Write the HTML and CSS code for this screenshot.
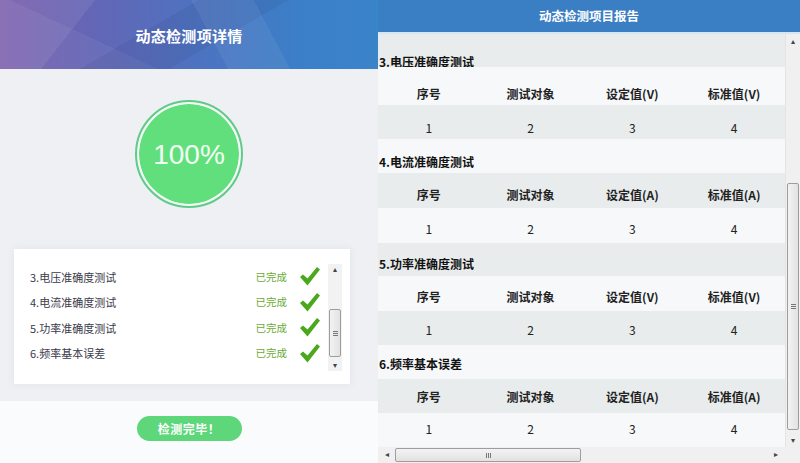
FILE: index.html
```html
<!DOCTYPE html>
<html lang="zh-CN">
<head>
<meta charset="utf-8">
<title>动态检测</title>
<link rel="stylesheet" href="styles.css">
</head>
<body>
<div class="page">
  <section class="left">
    <header class="left-head"><h1>动态检测项详情</h1></header>
    <div class="left-body">
      <div class="progress"><span>100%</span></div>
      <div class="list-box">
        <div class="list-wrap">
          <ul class="items">
            <li><span class="name">3.电压准确度测试</span><span class="state">已完成</span><svg class="check" viewBox="0 0 20 19"><polygon points="0,10 3,7.5 7.5,11.5 17,0 20,2.5 7.5,18.5"/></svg></li>
            <li><span class="name">4.电流准确度测试</span><span class="state">已完成</span><svg class="check" viewBox="0 0 20 19"><polygon points="0,10 3,7.5 7.5,11.5 17,0 20,2.5 7.5,18.5"/></svg></li>
            <li><span class="name">5.功率准确度测试</span><span class="state">已完成</span><svg class="check" viewBox="0 0 20 19"><polygon points="0,10 3,7.5 7.5,11.5 17,0 20,2.5 7.5,18.5"/></svg></li>
            <li><span class="name">6.频率基本误差</span><span class="state">已完成</span><svg class="check" viewBox="0 0 20 19"><polygon points="0,10 3,7.5 7.5,11.5 17,0 20,2.5 7.5,18.5"/></svg></li>
          </ul>
          <div class="mini-scroll">
            <span class="arr">&#9652;</span>
            <div class="mini-track"><div class="mini-thumb"><i></i><i></i><i></i></div></div>
            <span class="arr">&#9662;</span>
          </div>
        </div>
      </div>
      <div class="left-foot"><button class="done">检测完毕！</button></div>
    </div>
  </section>
  <section class="right">
    <header class="right-head"><h2>动态检测项目报告</h2></header>
    <div class="report">
      <div class="report-main">
        <div class="rows">
          <div class="row title">3.电压准确度测试</div>
          <div class="row grid head"><span>序号</span><span>测试对象</span><span>设定值(V)</span><span>标准值(V)</span></div>
          <div class="row grid"><span>1</span><span>2</span><span>3</span><span>4</span></div>
          <div class="row title">4.电流准确度测试</div>
          <div class="row grid head"><span>序号</span><span>测试对象</span><span>设定值(A)</span><span>标准值(A)</span></div>
          <div class="row grid"><span>1</span><span>2</span><span>3</span><span>4</span></div>
          <div class="row title">5.功率准确度测试</div>
          <div class="row grid head"><span>序号</span><span>测试对象</span><span>设定值(V)</span><span>标准值(V)</span></div>
          <div class="row grid"><span>1</span><span>2</span><span>3</span><span>4</span></div>
          <div class="row title">6.频率基本误差</div>
          <div class="row grid head"><span>序号</span><span>测试对象</span><span>设定值(A)</span><span>标准值(A)</span></div>
          <div class="row grid"><span>1</span><span>2</span><span>3</span><span>4</span></div>
        </div>
        <div class="vscroll">
          <span class="arr">&#9652;</span>
          <div class="vtrack"><div class="vthumb"><i></i><i></i><i></i></div></div>
          <span class="arr">&#9662;</span>
        </div>
      </div>
      <div class="hbar">
        <div class="hscroll">
          <span class="harr">&#9666;</span>
          <div class="htrack"><div class="hthumb"><i></i><i></i><i></i></div></div>
          <span class="harr">&#9656;</span>
        </div>
        <div class="corner"></div>
      </div>
    </div>
  </section>
</div>
</body>
</html>
```
FILE: styles.css
```css
* { box-sizing: border-box; }
html, body { margin: 0; padding: 0; }
body {
  width: 800px; height: 463px; overflow: hidden;
  font-family: "Noto Sans CJK SC", "Liberation Sans", sans-serif;
  background: #f4f6f8;
}
.page { display: flex; width: 800px; height: 463px; }

/* left */
.left { width: 378px; display: flex; flex-direction: column; background: #eef0f3; }
.left-head {
  height: 69px; flex: none;
  display: flex; align-items: center; justify-content: center;
  background:
    linear-gradient(128deg, rgba(255,255,255,0.07) 0 22%, transparent 22% 100%),
    linear-gradient(62deg, transparent 0 55%, rgba(255,255,255,0.06) 55% 70%, transparent 70%),
    linear-gradient(150deg, transparent 0 40%, rgba(0,0,40,0.06) 40% 58%, transparent 58%),
    linear-gradient(25deg, rgba(255,255,255,0.05) 0 30%, transparent 30%),
    linear-gradient(90deg, #7b5dab 0%, #6366b6 25%, #4b74c1 55%, #3b7fc8 80%, #3a84ca 100%);
}
.left-head h1 {
  margin: 0; margin-top: 3px; color: #fff; font-size: 15px; font-weight: 700; line-height: 20px;
  letter-spacing: 0.3px;
}
.left-body { flex: 1; display: flex; flex-direction: column; align-items: center; }
.progress {
  margin-top: 31px; width: 108px; height: 108px; border-radius: 50%;
  border: 2px solid #5fcb88; padding: 2px; background: #62df7d; background-clip: content-box;
  box-shadow: inset 0 0 0 2px #f4fbf6;
  display: flex; align-items: center; justify-content: center;
}
.progress span {
  font-family: "Liberation Sans", Arial, sans-serif; font-size: 28px; color: #f2fff4; line-height: 1;
  margin-top: 1px;
}
.list-box {
  margin-top: 41px; width: 336px; height: 135px; align-self: flex-start; margin-left: 14px;
  background: #fff; box-shadow: 0 0 6px rgba(220,224,230,0.9);
  padding: 15px 8px 0 6px;
}
.list-wrap { display: flex; height: 107px; }
.items { list-style: none; margin: 0; padding: 0 0 0 10px; flex: 1; }
.items li { height: 25.5px; display: flex; align-items: center; }
.name { flex: 1; font-size: 11px; color: #3b3a4a; line-height: 14px; white-space: nowrap; }
.state { font-size: 10.5px; color: #6aab33; line-height: 14px; white-space: nowrap; flex: none; }
.check { width: 20px; height: 19px; fill: #4aa81d; margin: 0 8px 0 13px; flex: none; }
.mini-scroll {
  width: 14px; display: flex; flex-direction: column; align-items: center;
  background: #f2f2f2;
}
.arr { font-size: 8px; line-height: 9px; color: #444; height: 11px; display: flex; align-items: center; font-family: "DejaVu Sans", sans-serif; }
.mini-track { flex: 1; width: 100%; padding: 34px 1px 3px; }
.mini-thumb, .vthumb {
  height: 48px; border: 1px solid #9d9d9d; border-radius: 2px;
  background: linear-gradient(90deg, #f3f3f3, #e2e2e2);
  display: flex; flex-direction: column; align-items: center; justify-content: center; gap: 1px;
}
.mini-thumb i, .vthumb i { display: block; width: 5px; height: 1px; background: #777; }

/* button */
.left-foot {
  margin-top: 17px; align-self: stretch; flex: 1; background: #fafbfc;
  display: flex; justify-content: center; align-items: flex-start;
}
.done {
  margin-top: 15px; width: 105px; height: 25px; border: 0; border-radius: 13px;
  background: #5dd77a; color: #fff; font-family: inherit; font-size: 12px; font-weight: 700;
  line-height: 25px; padding: 0; letter-spacing: 0.5px;
}

/* right */
.right { flex: 1; display: flex; flex-direction: column; background: #f5f7f9; }
.right-head {
  height: 34px; flex: none; background: #3a7ec3;
  display: flex; align-items: center; justify-content: center;
  border-bottom: 2px solid #d6e6f2;
}
.right-head h2 { margin: 0; color: #fff; font-size: 12.5px; font-weight: 700; line-height: 16px; }
.report { flex: 1; display: flex; flex-direction: column; }
.report-main { flex: 1; display: flex; min-height: 0; }
.rows { flex: 1; display: flex; flex-direction: column; }
.row { flex: none; font-size: 12px; line-height: 14px; color: #222; }
.row:nth-child(odd) { background: #e8ecec; }
.row:nth-child(even) { background: #f6f8fa; }
.row:nth-child(1) { height: 33px; padding-top: 21px; }
.row:nth-child(2) { height: 38px; padding-top: 20px; }
.row:nth-child(3) { height: 34px; padding-top: 16px; }
.row:nth-child(4) { height: 34px; padding-top: 16px; }
.row:nth-child(5) { height: 35px; padding-top: 15px; }
.row:nth-child(6) { height: 35px; padding-top: 14px; }
.row:nth-child(7) { height: 33px; padding-top: 14px; }
.row:nth-child(8) { height: 35px; padding-top: 14px; }
.row:nth-child(9) { height: 34px; padding-top: 12px; }
.row:nth-child(10) { height: 34px; padding-top: 12px; }
.row:nth-child(11) { height: 34px; padding-top: 11px; }
.row:nth-child(12) { height: 32px; padding-top: 9px; }
.title { font-weight: 700; color: #111; padding-left: 1px; }
.grid { display: grid; grid-template-columns: repeat(4, 1fr); text-align: center; }
.grid span { display: block; }
.head { font-weight: 700; color: #222; }
.vscroll {
  width: 15px; display: flex; flex-direction: column; align-items: center; background: #f0f0f0;
  border-left: 1px solid #e4e4e4;
}
.vscroll .arr { height: 14px; }
.vtrack { flex: 1; width: 100%; padding: 135px 1px 3px; }
.vthumb { height: 100%; }
.hbar { height: 16px; display: flex; flex: none; }
.hscroll { flex: 1; display: flex; align-items: center; background: #f0f0f0; padding: 0 4px; }
.harr { font-size: 8px; color: #444; width: 10px; text-align: center; font-family: "DejaVu Sans", sans-serif; line-height: 16px; }
.htrack { flex: 1; height: 100%; padding: 1px 190px 1px 3px; }
.hthumb {
  height: 100%; border: 1px solid #9d9d9d; border-radius: 2px;
  background: linear-gradient(180deg, #f3f3f3, #e2e2e2);
  display: flex; align-items: center; justify-content: center; gap: 1px;
}
.hthumb i { display: block; width: 1px; height: 5px; background: #777; }
.corner { width: 15px; background: #f0f0f0; }
```
